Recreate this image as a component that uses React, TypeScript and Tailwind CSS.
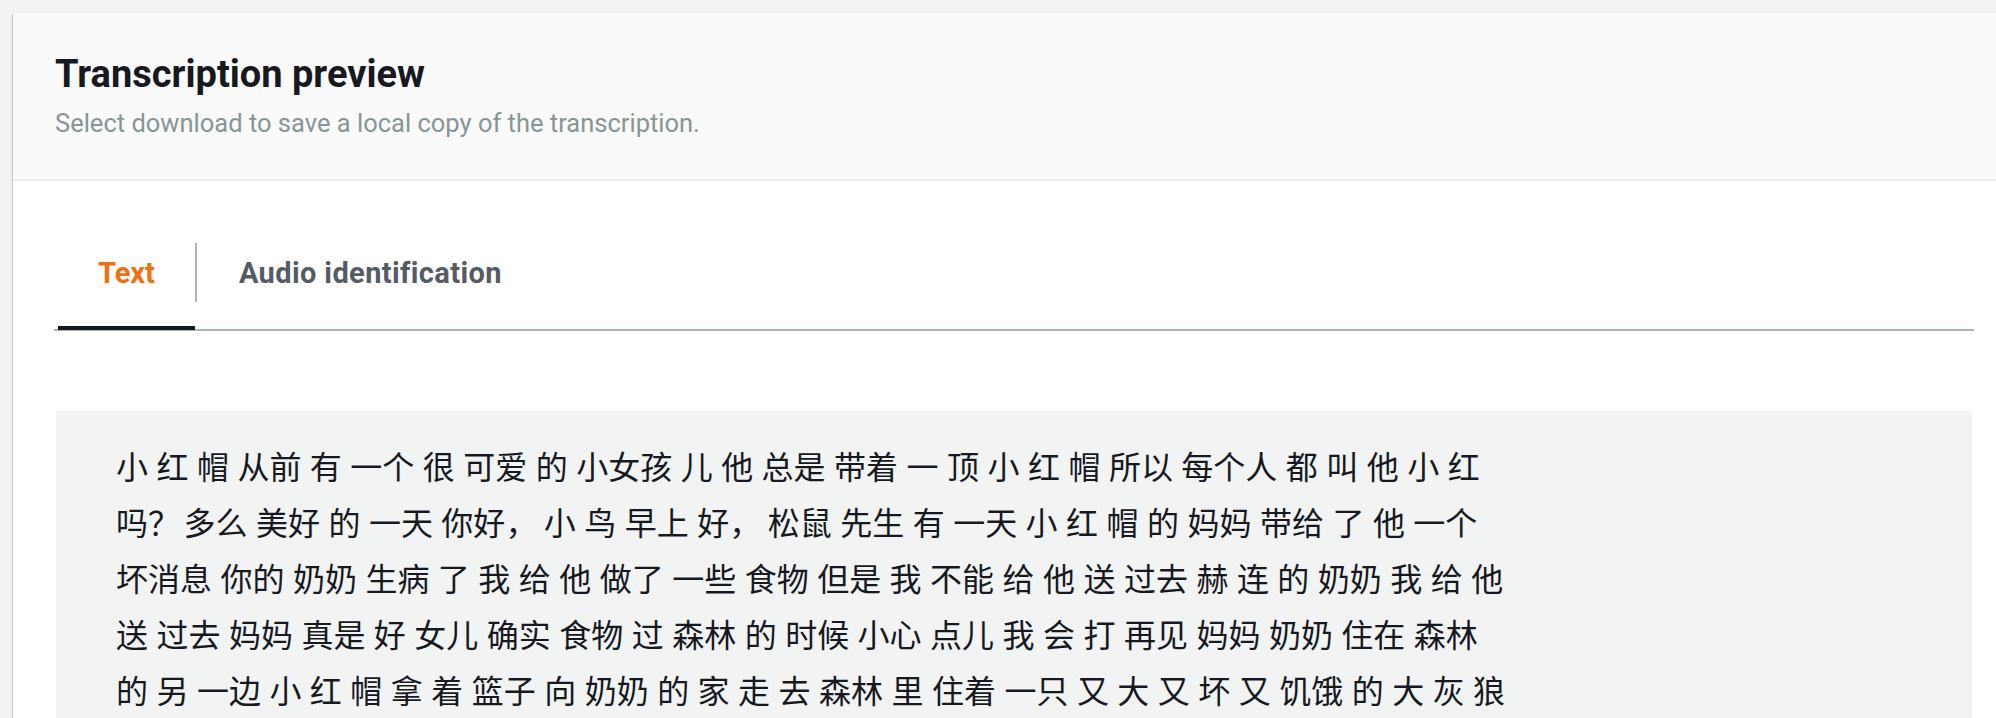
import React from "react";

const lines = [
  "小 红 帽 从前 有 一个 很 可爱 的 小女孩 儿 他 总是 带着 一 顶 小 红 帽 所以 每个人 都 叫 他 小 红",
  "吗？ 多么 美好 的 一天 你好， 小 鸟 早上 好， 松鼠 先生 有 一天 小 红 帽 的 妈妈 带给 了 他 一个",
  "坏消息 你的 奶奶 生病 了 我 给 他 做了 一些 食物 但是 我 不能 给 他 送 过去 赫 连 的 奶奶 我 给 他",
  "送 过去 妈妈 真是 好 女儿 确实 食物 过 森林 的 时候 小心 点儿 我 会 打 再见 妈妈 奶奶 住在 森林",
  "的 另 一边 小 红 帽 拿 着 篮子 向 奶奶 的 家 走 去 森林 里 住着 一只 又 大 又 坏 又 饥饿 的 大 灰 狼",
];

function renderLine(l: string) {
  const parts = l.split(/([？，])/);
  return parts.map((p, j) =>
    p === "？" ? (
      <span key={j} className="tracking-[-5px]">
        {p}
      </span>
    ) : p === "，" ? (
      <span key={j} className="tracking-[-2px]">
        {p}
      </span>
    ) : (
      <React.Fragment key={j}>{p}</React.Fragment>
    )
  );
}

export default function App() {
  return (
    <div
      className="h-[718px] w-full overflow-hidden bg-[#f2f3f3] pl-[13px] pt-[13px]"
      style={{ fontFamily: "Roboto, 'Noto Sans CJK SC', sans-serif" }}
    >
      <div className="w-[2002px] min-h-[720px] bg-white shadow-[0_1px_1px_0_rgba(0,28,36,0.3),1px_1px_1px_0_rgba(0,28,36,0.15),-1px_1px_1px_0_rgba(0,28,36,0.15)]">
        <div className="bg-[#fafafa] border-b-2 border-[#eaeded] pl-[42px] pt-[39px] pb-[40px]">
          <h2 className="text-[38px] leading-[44px] font-bold text-[#16191f]">
            Transcription preview
          </h2>
          <p className="mt-[11px] text-[25.5px] leading-[32px] text-[#879596]">
            Select download to save a local copy of the transcription.
          </p>
        </div>
        <div className="px-[41px] pt-[47px]">
          <div className="flex items-start border-b-2 border-[#aab7b8] pl-[4px]">
            <button className="relative px-[40px] pt-[27px] pb-[38px] text-[29px] leading-[36px] font-bold text-[#ec7211]">
              Text
              <span className="absolute left-0 right-0 -bottom-[1px] h-[4px] bg-[#16191f]" />
            </button>
            <div className="mt-[15px] h-[59px] w-[2px] bg-[#aab7b8]" />
            <button className="px-[42px] pt-[27px] pb-[38px] text-[29px] leading-[36px] font-bold tracking-[0.38px] text-[#545b64]">
              Audio identification
            </button>
          </div>
          <div className="mx-[2px] mt-[80px] min-h-[320px] bg-[#f2f3f3] pl-[60px] pt-[26px]">
            <p
              className="text-[32px] leading-[56px] text-[#16191f] whitespace-nowrap [word-spacing:1.3px]"
              style={{ fontFamily: "'Noto Sans CJK SC', sans-serif" }}
            >
              {lines.map((l, i) => (
                <React.Fragment key={i}>
                  {renderLine(l)}
                  {i < lines.length - 1 && <br />}
                </React.Fragment>
              ))}
            </p>
          </div>
        </div>
      </div>
    </div>
  );
}
